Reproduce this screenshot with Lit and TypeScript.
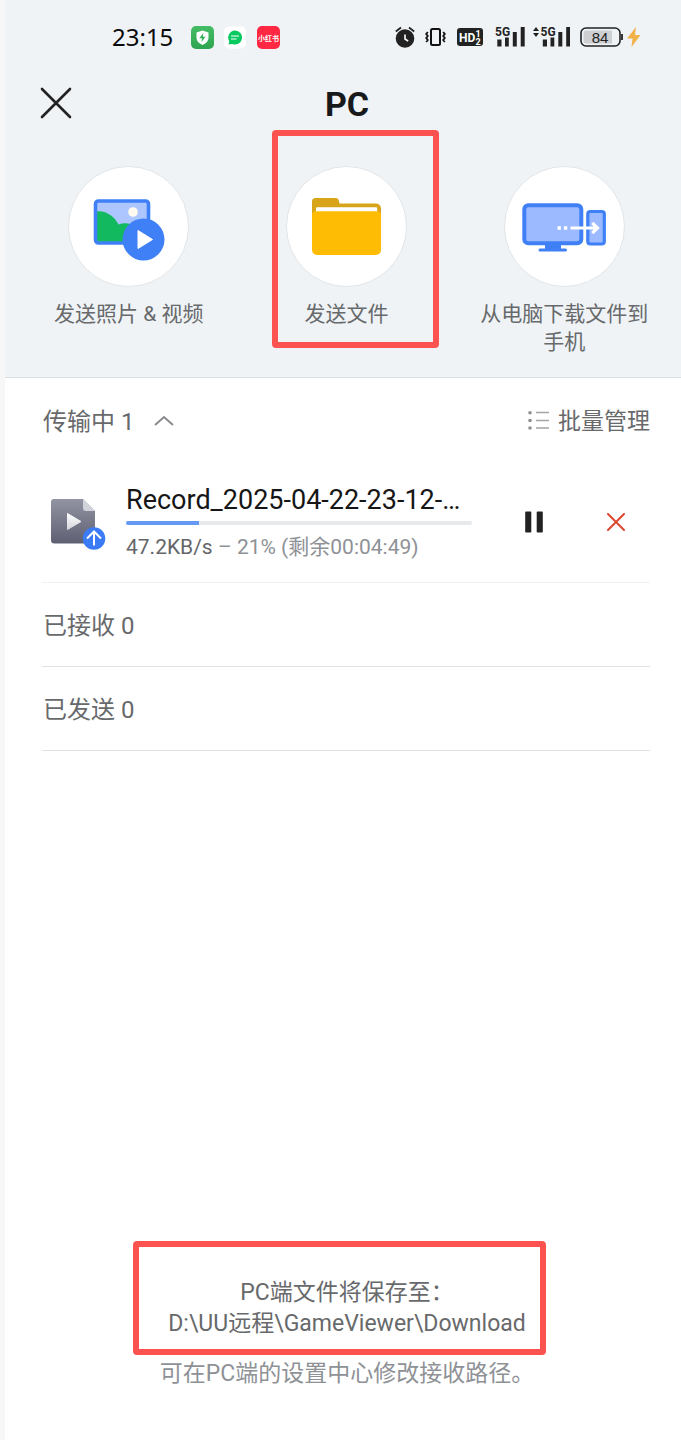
import { LitElement, html, css, svg } from "lit";
import { customElement, property, state } from "lit/decorators.js";

const photoIcon = svg`
  <svg viewBox="1 1 120 120" width="120" height="120" aria-hidden="true">
    <rect x="27.5" y="35" width="53" height="42" rx="3" fill="#aec6ff"/>
    <circle cx="65" cy="46" r="4.8" fill="#fffaf0"/>
    <path d="M28 45.5C38 44 47 51 50.500 58.500C57 56 64 57 68 62V77H28Z" fill="#12b95f"/>
    <rect x="27.500" y="35" width="53" height="42" rx="3" fill="none" stroke="#4080f7" stroke-width="3.600"/>
    <circle cx="75.500" cy="73.500" r="21" fill="#4080f7"/>
    <path d="M70 64.500L84.500 73.500L70 82.500Z" fill="#fff" stroke="#fff" stroke-width="1" stroke-linejoin="round"/>
  </svg>`;

const folderIcon = svg`
  <svg viewBox="0.5 0.5 120 120" width="120" height="120" aria-hidden="true">
    <path d="M25.500 48V35a3.500 3.500 0 0 1 3.500-3.500H49a3.500 3.500 0 0 1 3.400 3L53 37H89.500a5 5 0 0 1 5 5V50H25.500Z" fill="#d8a51a"/>
    <path d="M29.500 46V42a1.200 1.200 0 0 1 1.200-1.200H89.500a1.200 1.200 0 0 1 1.200 1.200V46Z" fill="#fff"/>
    <path d="M29.500 44.800H90.500Q94.500 44.800 94.500 48.800V83.500a5 5 0 0 1-5 5H30.500a5 5 0 0 1-5-5V48.800Q25.500 44.800 29.500 44.800Z" fill="#ffbc04"/>
  </svg>`;

const downloadIcon = svg`
  <svg viewBox="0.5 1 120 120" width="120" height="120" aria-hidden="true">
    <rect x="19.800" y="39.300" width="57" height="38" rx="4" fill="#9cbaff" stroke="#4080f7" stroke-width="4"/>
    <path d="M40.500 79H56.500V82.500H61a1.500 1.500 0 0 1 0 3H35.500a1.500 1.500 0 0 1 0-3H40.500Z" fill="#4080f7"/>
    <rect x="83.300" y="45.500" width="16.500" height="32.500" rx="2.500" fill="#9cbaff" stroke="#4080f7" stroke-width="3.200"/>
    <path d="M53 60.200h3.400v3.600H53zM59.400 60.200h3.400v3.600h-3.400z" fill="#fff"/>
    <path d="M66 62H92M87.800 56.800L93 62L87.800 67.200" fill="none" stroke="#fff" stroke-width="3.200"/>
  </svg>`;

const signalBars = svg`
  <path d="M2.300 13.500h4.200V20.500h-4.200zM10 11.500h3.800V20.500h-3.800zM17.800 6h4V20.500h-4zM25.700 1h4V20.500h-4z" fill="#222"/>
  <text class="net" x="0" y="10">5G</text>`;

@customElement("status-bar")
export class StatusBar extends LitElement {
  static styles = css`
    :host {
      display: flex;
      align-items: center;
      height: 74px;
      padding: 0 40px 0 107px;
      color: #0a0a0a;
    }
    svg { display: block; flex: none; }
    .time { font: 24px/32px "Noto Sans", sans-serif; margin-right: 18px; }
    .apps { display: flex; gap: 10px; }
    .system { display: flex; align-items: center; margin-left: auto; }
    .alarm { margin-right: 10px; }
    .vibrate { margin-right: 11px; }
    .hd { margin-right: 12px; }
    .signal { margin-right: 8px; }
    .signal-data { margin-right: 10px; }
    .battery { margin-right: 3px; }
    .net { font: 700 12px Roboto, sans-serif; fill: #222; }
    .hd-text { font: 700 12px Roboto, sans-serif; fill: #fff; }
    .hd-num { font: 700 9px Roboto, sans-serif; fill: #fff; }
    .level { font: 15px "Liberation Sans", sans-serif; fill: #222; }
    .brand { font: 700 7px "Noto Sans CJK SC", sans-serif; fill: #fff; }
  `;

  render() {
    return html`
      <span class="time">23:15</span>
      <div class="apps">
        <svg width="23" height="23" viewBox="0 0 23 23">
          <defs>
            <linearGradient id="g" x2="0" y2="1">
              <stop stop-color="#43bd65"/><stop offset="1" stop-color="#2fa44f"/>
            </linearGradient>
          </defs>
          <rect width="23" height="23" rx="5" fill="url(#g)"/>
          <path d="M11.500 4.500L17.500 6.500V11.500Q17.500 16.500 11.500 19Q5.500 16.500 5.500 11.500V6.500Z" fill="#fff"/>
          <path d="M12.300 7L8.300 12.200H11L10.500 16L14.500 10.700H11.900Z" fill="#37ae58"/>
        </svg>
        <svg width="23" height="23" viewBox="0 0 23 23">
          <rect width="22" height="22" y=".5" rx="5" fill="#fff"/>
          <path d="M11 4.500a7 7 0 1 1-2.800 13.400L4.600 18.500L5.200 15.100A7 7 0 0 1 11 4.500Z" fill="#06c95f"/>
          <path d="M7 10H15M7 13H12.500" stroke="#fff" stroke-width="1.200"/>
        </svg>
        <svg width="23" height="23" viewBox="0 0 23 23">
          <rect width="23" height="23" rx="5" fill="#ff2741"/>
          <text class="brand" x="11.500" y="14.500" text-anchor="middle">小红书</text>
        </svg>
      </div>
      <div class="system">
        <svg class="alarm" width="20" height="22" viewBox="0 0 20 22">
          <circle cx="10" cy="12.500" r="9.300" fill="#222"/>
          <path d="M.8 5.500L6 1.500M19.200 5.500L14 1.500" stroke="#222" stroke-width="1.800"/>
          <path d="M10 8.500V13L13.200 15.200" fill="none" stroke="#fff" stroke-width="1.600"/>
        </svg>
        <svg class="vibrate" width="21" height="20" viewBox="0 0 21 20">
          <rect x="6" y="2" width="9" height="16" rx="1.500" fill="none" stroke="#111" stroke-width="2"/>
          <path d="M2.800 5l-1.600 2l1.600 2l-1.600 2l1.600 2l-1.600 2M18.200 5l1.600 2l-1.600 2l1.600 2l-1.600 2l1.600 2" fill="none" stroke="#111" stroke-width="1.800"/>
        </svg>
        <svg class="hd" width="26" height="18" viewBox="0 0 26 18">
          <rect width="26" height="18" rx="3" fill="#222"/>
          <text class="hd-text" x="2" y="13.500">HD</text>
          <text class="hd-num" x="18.500" y="8.500">1</text>
          <text class="hd-num" x="18.500" y="16.500">2</text>
        </svg>
        <svg class="signal" width="30" height="22" viewBox="0 0 30 22">${signalBars}</svg>
        <svg class="signal-data" width="37" height="22" viewBox="0 0 37 22">
          <path d="M0 5L3 1L6 5ZM0 7L3 11L6 7Z" fill="#222"/>
          <g transform="translate(7.500 0)">${signalBars}</g>
        </svg>
        <svg class="battery" width="44" height="20" viewBox="0 0 44 20">
          <rect x="1" y="1" width="39" height="18" rx="5" fill="none" stroke="#222" stroke-width="1.600"/>
          <path d="M6 3.500H32V16.500H6Q3.500 16.500 3.500 14V6Q3.500 3.500 6 3.500Z" fill="#cdcfd1"/>
          <path d="M42 7v6" stroke="#222" stroke-width="1.800"/>
          <text class="level" x="20" y="15.500" text-anchor="middle">84</text>
        </svg>
        <svg width="14" height="20" viewBox="0 0 14 20">
          <path d="M9 0L0 11.500H5.500L4.500 20L13.500 8H8Z" fill="#f2b24a"/>
        </svg>
      </div>
    `;
  }
}

@customElement("send-action")
export class SendAction extends LitElement {
  @property() label = "";
  @property({ attribute: false }) icon: unknown;
  @property({ type: Boolean }) marked = false;

  static styles = css`
    :host { display: block; position: relative; }
    .action {
      display: flex;
      flex-direction: column;
      align-items: center;
      gap: 13px;
      width: 100%;
      padding: 0 22px;
      border: 0;
      background: none;
      color: #67696b;
      font: 21px/28px Roboto, "Noto Sans CJK SC", sans-serif;
      cursor: pointer;
    }
    .disc {
      display: grid;
      place-items: center;
      width: 121px;
      height: 121px;
      border: 1px solid #e2e5e8;
      border-radius: 50%;
      background: #fff;
      box-sizing: border-box;
    }
    .mark {
      position: absolute;
      inset: -36px 16px auto 34px;
      height: 218px;
      box-sizing: border-box;
      border: 6px solid #fc5250;
      border-radius: 4px;
      pointer-events: none;
    }
  `;

  render() {
    return html`
      <button class="action"><span class="disc">${this.icon}</span><span>${this.label}</span></button>
      ${this.marked ? html`<div class="mark"></div>` : ""}
    `;
  }
}

@customElement("transfer-item")
export class TransferItem extends LitElement {
  @property() name = "";
  @property() speed = "";
  @property() left = "";
  @property({ type: Number }) percent = 0;

  static styles = css`
    :host {
      display: flex;
      align-items: center;
      height: 120px;
      border-bottom: 1px solid #eff0f1;
    }
    svg { display: block; }
    .file { flex: none; margin: 4px 20px 0 8px; }
    .info { flex: 1; min-width: 0; margin-right: 38px; }
    .name {
      font-size: 27px;
      line-height: 34px;
      color: #161616;
      overflow: hidden;
      white-space: nowrap;
      text-overflow: ellipsis;
    }
    .track { height: 4px; margin: 4px 0 8px; border-radius: 2px; background: #e6eaed; overflow: hidden; }
    .fill { height: 100%; background: #6599f4; }
    .meta { font-size: 21px; line-height: 28px; color: #8e9196; white-space: nowrap; }
    .speed { color: #646669; }
    .control {
      display: grid;
      place-items: center;
      width: 48px;
      height: 48px;
      padding: 0;
      border: 0;
      background: none;
      cursor: pointer;
    }
    .cancel { width: 68px; margin-left: 24px; }
  `;

  render() {
    return html`
      <svg class="file" width="56" height="54" viewBox="0 0 56 54" aria-hidden="true">
        <defs>
          <linearGradient id="f" x2="0" y2="1">
            <stop stop-color="#9294a3"/><stop offset="1" stop-color="#5e6072"/>
          </linearGradient>
          <linearGradient id="p" x2="0" y2="1">
            <stop stop-color="#fff"/><stop offset="1" stop-color="#d5d6dc"/>
          </linearGradient>
        </defs>
        <path d="M4 2H33L45 14V43a3.500 3.500 0 0 1-3.500 3.500H4.500A3.500 3.500 0 0 1 1 43V5A3 3 0 0 1 4 2Z" fill="url(#f)"/>
        <path d="M33 2L45 14H36a3 3 0 0 1-3-3Z" fill="#d2d3da"/>
        <path d="M17.500 16.500L31 24.500L17.500 32.500Z" fill="url(#p)" stroke="url(#p)" stroke-linejoin="round"/>
        <circle cx="44" cy="41.500" r="11.300" fill="#3b7cf6"/>
        <path d="M44 48.500V35M37 41.500L44 34.500L51 41.500" fill="none" stroke="#fff" stroke-width="2"/>
      </svg>
      <div class="info">
        <div class="name">${this.name}</div>
        <div class="track" role="progressbar" aria-label=${this.name} aria-valuenow=${this.percent}>
          <div class="fill" style="width:${this.percent}%"></div>
        </div>
        <div class="meta"><span class="speed">${this.speed}</span> – ${this.percent}% (剩余${this.left})</div>
      </div>
      <button class="control" aria-label="暂停">
        <svg width="18" height="22" viewBox="0 0 18 22">
          <path d="M1 .5H5.500a.8.8 0 0 1 .8.800V20.700a.8.8 0 0 1-.8.800H1a.8.8 0 0 1-.8-.8V1.300A.8.8 0 0 1 1 .5ZM12.500 .5H17a.8.8 0 0 1 .8.800V20.700a.8.8 0 0 1-.8.800H12.500a.8.8 0 0 1-.8-.8V1.300A.8.8 0 0 1 12.500 .5Z" fill="#222"/>
        </svg>
      </button>
      <button class="control cancel" aria-label="取消">
        <svg width="18" height="18" viewBox="0 0 18 18">
          <path d="M1 1L17 17M17 1L1 17" stroke="#dd4632" stroke-width="2" stroke-linecap="round"/>
        </svg>
      </button>
    `;
  }
}

@customElement("app-root")
export class AppRoot extends LitElement {
  @state() private open = true;

  static styles = css`
    :host {
      display: flex;
      flex-direction: column;
      min-height: 100vh;
      box-sizing: border-box;
      border-left: 5px solid #f7f7f7;
      background: #fff;
      color: #67696b;
      font-family: Roboto, "Noto Sans CJK SC", sans-serif;
    }
    .top { background: #eff3f6; border-bottom: 1px solid #dcdfe1; padding-bottom: 21px; }
    .bar {
      display: grid;
      grid-template-columns: 60px 1fr 60px;
      align-items: center;
      height: 60px;
      padding: 0 13px 0 21px;
    }
    .title { margin: 0; text-align: center; font-size: 34px; line-height: 40px; font-weight: 700; color: #17191a; }
    .close, .fold, .batch { padding: 0; border: 0; background: none; color: inherit; font: inherit; cursor: pointer; }
    .close { display: grid; place-items: center; height: 60px; padding-bottom: 2px; }
    svg { display: block; }
    .actions {
      display: grid;
      grid-template-columns: repeat(3, 1fr);
      padding: 32px 8px 0 15px;
    }
    .list { padding: 0 31px 0 37px; }
    .row {
      display: flex;
      align-items: center;
      justify-content: space-between;
      height: 84px;
      padding: 3px 0 0 1px;
      box-sizing: border-box;
      font-size: 24px;
      line-height: 32px;
    }
    .line { border-bottom: 1px solid #e2e3e4; }
    .heading { margin: 0; font: inherit; }
    .fold { display: flex; align-items: center; gap: 20px; }
    .batch { display: flex; align-items: center; gap: 8px; font-size: 23px; }
    .foot {
      margin-top: auto;
      padding: 24px 23px 51px 31px;
      text-align: center;
      font-size: 23px;
      line-height: 31px;
    }
    .path { position: relative; width: fit-content; margin: 0 auto; }
    .mark {
      position: absolute;
      inset: -36px -20px -16px -35px;
      box-sizing: border-box;
      border: 6px solid #fc5250;
      border-radius: 4px;
      pointer-events: none;
    }
    .hint { margin: 19px 0 0; color: #8e9196; }
  `;

  render() {
    return html`
      <header class="top">
        <status-bar></status-bar>
        <div class="bar">
          <button class="close" aria-label="关闭">
            <svg width="32" height="32" viewBox="0 0 32 32">
              <path d="M2 2L30 30M30 2L2 30" stroke="#222" stroke-width="2.600" stroke-linecap="round"/>
            </svg>
          </button>
          <h1 class="title">PC</h1>
        </div>
        <nav class="actions">
          <send-action label="发送照片 &amp; 视频" .icon=${photoIcon}></send-action>
          <send-action label="发送文件" marked .icon=${folderIcon}></send-action>
          <send-action label="从电脑下载文件到手机" .icon=${downloadIcon}></send-action>
        </nav>
      </header>
      <main class="list">
        <div class="row">
          <button class="fold" aria-expanded=${this.open} @click=${() => (this.open = !this.open)}>
            传输中 1
            <svg width="20" height="12" viewBox="0 0 20 12">
              <path d="M1 9L10 1L19 9" fill="none" stroke="#85878a" stroke-width="1.800"/>
            </svg>
          </button>
          <button class="batch">
            <svg width="23" height="22" viewBox="0 0 23 22">
              <path d="M9 1.500H22M9 9.500H22M9 17H22" stroke="#a2a4a7" stroke-width="1.600"/>
              <g fill="#8e9094"><circle cx="3" cy="1.800" r="1.800"/><circle cx="3" cy="9.500" r="1.800"/><circle cx="3" cy="17" r="1.800"/></g>
            </svg>
            批量管理
          </button>
        </div>
        ${this.open
          ? html`<transfer-item name="Record_2025-04-22-23-12-…" speed="47.2KB/s" left="00:04:49" percent="21"></transfer-item>`
          : ""}
        <div class="row line"><h2 class="heading">已接收 0</h2></div>
        <div class="row line"><h2 class="heading">已发送 0</h2></div>
      </main>
      <footer class="foot">
        <div class="path">
          PC端文件将保存至：<br>D:\\UU远程\\GameViewer\\Download
          <div class="mark"></div>
        </div>
        <p class="hint">可在PC端的设置中心修改接收路径。</p>
      </footer>
    `;
  }
}
